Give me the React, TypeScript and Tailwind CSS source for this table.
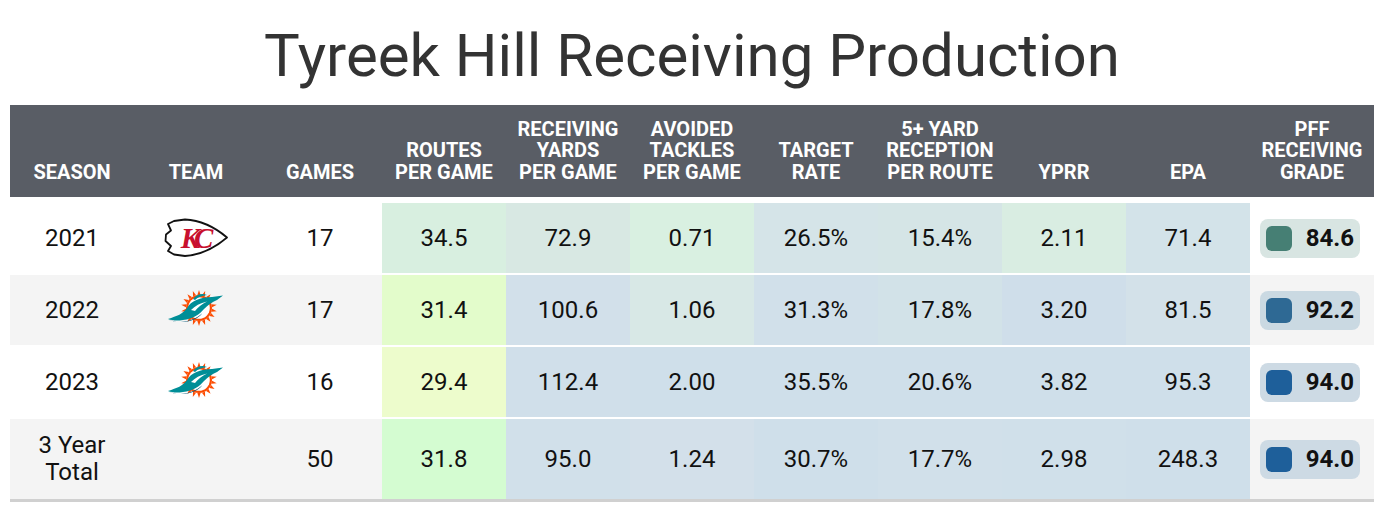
import React from 'react';

type Row = {
  season: string[];
  team: 'KC' | 'MIA' | null;
  games: string;
  vals: string[];
  cells: string[];
  grade: string;
  pill: string;
  square: string;
  bg: string;
  h: string;
};

const headers = [
  ['SEASON'],
  ['TEAM'],
  ['GAMES'],
  ['ROUTES', 'PER GAME'],
  ['RECEIVING', 'YARDS', 'PER GAME'],
  ['AVOIDED', 'TACKLES', 'PER GAME'],
  ['TARGET', 'RATE'],
  ['5+ YARD', 'RECEPTION', 'PER ROUTE'],
  ['YPRR'],
  ['EPA'],
  ['PFF', 'RECEIVING', 'GRADE'],
];

const rows: Row[] = [
  {
    season: ['2021'],
    team: 'KC',
    games: '17',
    vals: ['34.5', '72.9', '0.71', '26.5%', '15.4%', '2.11', '71.4'],
    cells: ['bg-[#d8efe0]', 'bg-[#d8e8e3]', 'bg-[#d9f0e1]', 'bg-[#d5e4e8]', 'bg-[#d5e5e6]', 'bg-[#d9ede2]', 'bg-[#d3e3e9]'],
    grade: '84.6',
    pill: 'bg-[#d8e5e2]',
    square: 'bg-[#467f74]',
    bg: 'bg-white',
    h: 'h-[70px]',
  },
  {
    season: ['2022'],
    team: 'MIA',
    games: '17',
    vals: ['31.4', '100.6', '1.06', '31.3%', '17.8%', '3.20', '81.5'],
    cells: ['bg-[#e3fccb]', 'bg-[#d2e0ea]', 'bg-[#d8e8e6]', 'bg-[#d1e0ea]', 'bg-[#d2e2e8]', 'bg-[#cfdeea]', 'bg-[#d3e1e9]'],
    grade: '92.2',
    pill: 'bg-[#cad9e2]',
    square: 'bg-[#2e6994]',
    bg: 'bg-[#f4f4f4]',
    h: 'h-[70px]',
  },
  {
    season: ['2023'],
    team: 'MIA',
    games: '16',
    vals: ['29.4', '112.4', '2.00', '35.5%', '20.6%', '3.82', '95.3'],
    cells: ['bg-[#edfccc]', 'bg-[#d0dfea]', 'bg-[#cfdfea]', 'bg-[#cfdfea]', 'bg-[#cfdfea]', 'bg-[#cfdfea]', 'bg-[#cfdfea]'],
    grade: '94.0',
    pill: 'bg-[#cddae4]',
    square: 'bg-[#1e5f9a]',
    bg: 'bg-white',
    h: 'h-[70px]',
  },
  {
    season: ['3 Year', 'Total'],
    team: null,
    games: '50',
    vals: ['31.8', '95.0', '1.24', '30.7%', '17.7%', '2.98', '248.3'],
    cells: ['bg-[#d4fcd1]', 'bg-[#d1e0ea]', 'bg-[#d3e0ea]', 'bg-[#cfdfea]', 'bg-[#d1e0ea]', 'bg-[#d0e0ea]', 'bg-[#cfdfea]'],
    grade: '94.0',
    pill: 'bg-[#cddae4]',
    square: 'bg-[#1e5f9a]',
    bg: 'bg-[#f4f4f4]',
    h: 'h-[80px]',
  },
];

function ChiefsLogo() {
  return (
    <svg width="66" height="40" viewBox="0 0 66 40">
      <path
        d="M5 6 L11 3 L22 1.5 Q44 2.5 64 19.5 Q44 36.5 22 38 L11 36.5 L5 33 L8 28 L2.5 23 L3 16.5 L8 12.5 Z"
        fill="#fff"
        stroke="#111"
        strokeWidth="1.8"
        strokeLinejoin="round"
      />
      <text
        x="31"
        y="30"
        textAnchor="middle"
        fontFamily="'Liberation Serif', serif"
        fontWeight="bold"
        fontStyle="italic"
        fontSize="29"
        fill="#c8102e"
        letterSpacing="-6"
      >
        KC
      </text>
    </svg>
  );
}

function DolphinsLogo() {
  const rays = Array.from({ length: 18 }, (_, i) => (i * 360) / 18);
  return (
    <svg width="58" height="42" viewBox="0 0 58 42">
      <g transform="translate(32 19)">
        {rays.map((a) => (
          <polygon
            key={a}
            points="-1.6,-13 1.6,-13 0,-18"
            fill="#fc4c02"
            transform={`rotate(${a})`}
          />
        ))}
        <circle r="13" fill="#fc4c02" />
        <circle r="10.8" fill="#fff" />
      </g>
      <path
        d="M1 30 C10 27 16 25 20 19 C24 12 33 8 45 8 L56 6.5 L50 11 C45 13 41 16 37 20 C33 25 26 30 16 31 C10 32 5 31.5 1 30 Z"
        fill="#008e97"
      />
      <path
        d="M26 10 C30 5 35 4 40 6 C35 7 31 8 28 11 Z"
        fill="#008e97"
      />
      <path
        d="M2 31 C10 33.5 22 34 30 29 C33 27 35 25 37 22 C33 28 24 32 16 32.5 C10 33 6 32.5 2 31 Z"
        fill="#005778"
      />
      <path
        d="M24 21 C28 17 33 14 40 12.5 C35 15 31 18 28 22 Z"
        fill="#fff"
      />
    </svg>
  );
}

export default function App() {
  return (
    <div className="w-[1384px] h-[510px] bg-white font-['Roboto',sans-serif] overflow-hidden">
      {/* Title */}
      <div className="h-[105px] pt-[26px] text-center text-[60px] leading-[60px] text-[#333333]">
        Tyreek Hill Receiving Production
      </div>

      <div className="mx-[10px] w-[1364px]">
        {/* Header */}
        <div className="flex h-[92px] bg-[#595d65] text-white">
          {headers.map((lines, i) => (
            <div
              key={i}
              className="w-[124px] flex flex-col items-center justify-end pb-[14px] text-[20px] leading-[21.5px] font-bold text-center"
            >
              {lines.map((l) => (
                <div key={l} className="whitespace-nowrap">{l}</div>
              ))}
            </div>
          ))}
        </div>

        {/* Body */}
        <div className="mt-[6px] flex flex-col gap-[2px]">
          {rows.map((r, ri) => (
            <div key={ri} className={`flex ${r.h} ${r.bg} text-[24px] text-[#111111]`}>
              <div className="w-[124px] flex flex-col items-center justify-center leading-[27px]">
                {r.season.map((s) => (
                  <div key={s}>{s}</div>
                ))}
              </div>
              <div className="w-[124px] flex items-center justify-center">
                {r.team === 'KC' && <ChiefsLogo />}
                {r.team === 'MIA' && <DolphinsLogo />}
              </div>
              <div className="w-[124px] flex items-center justify-center">{r.games}</div>
              {r.vals.map((v, i) => (
                <div key={i} className={`w-[124px] flex items-center justify-center ${r.cells[i]}`}>
                  {v}
                </div>
              ))}
              <div className="w-[124px] flex items-center pl-[10px]">
                <div className={`w-[100px] h-[39px] rounded-[8px] flex items-center justify-between pl-[6px] pr-[6px] ${r.pill}`}>
                  <div className={`w-[26px] h-[25px] rounded-[6px] ${r.square}`} />
                  <div className="font-bold text-[24px] text-[#111111]">{r.grade}</div>
                </div>
              </div>
            </div>
          ))}
        </div>
        <div className="h-[3px] bg-[#d0d0d0]" />
      </div>
    </div>
  );
}
